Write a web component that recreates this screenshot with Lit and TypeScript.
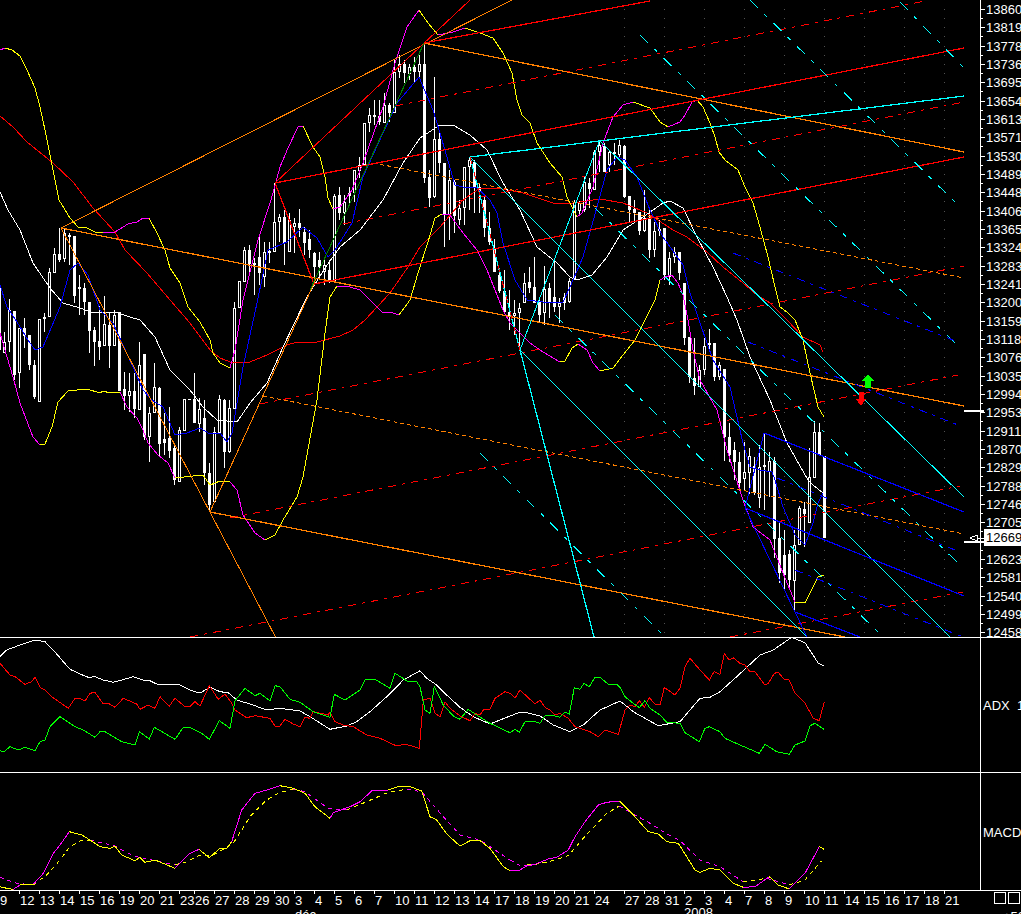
import { LitElement, html, svg, css } from 'lit';
import { customElement } from 'lit/decorators.js';

type Pt = [number, number];
type Candle = [number, number, number, number, number, number]; // x, high, low, bodyTop, bodyBottom, filled

// flat list of coordinates read at 3x, relative to a crop origin
const trace = (ox: number, oy: number, flat: number[]): Pt[] => {
  const out: Pt[] = [];
  for (let i = 0; i < flat.length; i += 2) out.push([ox + flat[i] / 3, oy + flat[i + 1] / 3]);
  return out;
};
const flatPts = (flat: number[]): Pt[] => trace(0, 0, flat.map((v) => v * 3));
const toAttr = (p: Pt[]) => p.map(([x, y]) => `${x.toFixed(1)},${y.toFixed(1)}`).join(' ');

const CANDLES: Candle[] = [
  [-1, 222, 355, 285, 350, 1], [4, 332, 353, 342, 353, 0], [9, 299, 352, 310, 342, 0], [14, 311, 380, 311, 375, 1],
  [19, 328, 388, 328, 373, 0], [24, 318, 348, 328, 336, 1], [29, 335, 370, 335, 365, 1], [34, 360, 399, 365, 397, 1],
  [39, 319, 402, 319, 402, 0], [44, 313, 332, 317, 319, 0], [49, 268, 317, 272, 317, 0], [54, 248, 273, 254, 273, 0],
  [59, 228, 262, 254, 260, 1], [64, 228, 262, 233, 259, 0], [69, 233, 265, 235, 237, 1], [74, 236, 303, 236, 296, 1],
  [79, 275, 315, 287, 289, 1], [84, 283, 315, 288, 302, 1], [89, 302, 353, 302, 331, 1], [94, 327, 366, 330, 342, 1],
  [99, 306, 360, 341, 347, 1], [104, 296, 346, 324, 346, 0], [109, 313, 368, 325, 346, 1], [114, 310, 346, 315, 346, 0],
  [119, 312, 391, 312, 391, 1], [124, 372, 410, 389, 396, 1], [129, 373, 412, 391, 396, 0], [134, 373, 418, 391, 409, 1],
  [139, 342, 410, 365, 410, 0], [144, 354, 440, 354, 437, 1], [149, 407, 462, 413, 437, 0], [154, 363, 413, 387, 413, 0],
  [159, 387, 457, 388, 444, 1], [164, 413, 455, 439, 443, 1], [169, 407, 458, 438, 451, 1], [174, 443, 485, 448, 480, 1],
  [179, 427, 482, 430, 482, 0], [184, 399, 431, 399, 431, 0], [189, 399, 400, 399, 400, 1], [194, 373, 423, 399, 423, 1],
  [199, 398, 432, 409, 424, 0], [204, 400, 485, 418, 473, 1], [209, 463, 512, 473, 505, 1], [214, 427, 502, 432, 502, 0],
  [219, 395, 433, 399, 433, 0], [224, 399, 468, 400, 452, 1], [229, 400, 453, 408, 452, 0], [234, 302, 409, 308, 409, 0],
  [239, 281, 308, 281, 308, 0], [244, 247, 282, 250, 282, 0], [249, 245, 273, 250, 264, 1], [254, 258, 295, 263, 265, 1],
  [259, 237, 285, 257, 273, 1], [264, 242, 287, 252, 277, 0], [269, 242, 263, 251, 253, 1], [274, 183, 252, 222, 252, 0],
  [279, 214, 242, 217, 222, 0], [284, 210, 265, 217, 243, 1], [289, 213, 252, 220, 252, 0], [294, 218, 253, 223, 227, 0],
  [299, 209, 237, 223, 228, 1], [304, 227, 255, 232, 243, 1], [309, 230, 258, 239, 250, 1], [314, 252, 277, 253, 267, 1],
  [319, 252, 277, 260, 267, 1], [324, 260, 285, 265, 272, 0], [329, 260, 283, 270, 280, 1], [334, 194, 282, 196, 282, 0],
  [339, 187, 220, 195, 213, 1], [344, 195, 225, 202, 213, 0], [349, 187, 203, 193, 196, 1], [354, 170, 202, 170, 193, 0],
  [359, 157, 178, 165, 171, 0], [364, 123, 165, 123, 165, 0], [369, 108, 132, 115, 123, 0], [374, 100, 125, 115, 117, 1],
  [379, 100, 125, 116, 122, 1], [384, 93, 123, 105, 123, 0], [389, 103, 122, 105, 113, 1], [394, 60, 113, 72, 113, 0],
  [399, 55, 78, 64, 72, 0], [404, 60, 83, 64, 73, 1], [409, 64, 80, 67, 74, 0], [414, 57, 83, 67, 72, 1],
  [419, 55, 78, 64, 72, 0], [424, 44, 183, 64, 178, 1], [429, 170, 207, 177, 198, 1], [434, 77, 198, 139, 197, 0],
  [439, 130, 173, 139, 163, 1], [444, 163, 247, 163, 215, 1], [449, 170, 240, 180, 215, 0], [454, 180, 233, 182, 216, 1],
  [459, 200, 225, 208, 220, 0], [464, 167, 225, 167, 208, 0], [469, 158, 210, 160, 167, 0], [474, 160, 213, 162, 187, 1],
  [479, 183, 213, 187, 192, 1], [484, 197, 237, 200, 228, 1], [489, 212, 245, 228, 242, 1], [494, 239, 272, 248, 272, 1],
  [499, 270, 293, 275, 291, 1], [504, 270, 312, 291, 312, 1], [509, 290, 330, 312, 316, 1], [514, 300, 335, 313, 316, 0],
  [519, 303, 348, 308, 313, 0], [524, 273, 303, 283, 303, 0], [529, 267, 293, 282, 288, 1], [534, 257, 303, 287, 303, 1],
  [539, 297, 323, 302, 315, 1], [544, 266, 325, 289, 313, 0], [549, 283, 318, 288, 302, 1], [554, 262, 312, 297, 307, 1],
  [559, 298, 323, 303, 307, 0], [564, 293, 310, 297, 303, 1], [569, 278, 303, 281, 302, 0], [574, 200, 280, 202, 280, 0],
  [579, 201, 216, 203, 211, 0], [584, 177, 212, 182, 210, 0], [589, 178, 208, 183, 189, 1], [594, 150, 190, 152, 190, 0],
  [599, 142, 172, 145, 152, 0], [604, 143, 172, 146, 172, 1], [609, 150, 172, 152, 165, 0], [614, 143, 165, 152, 154, 1],
  [619, 140, 157, 145, 155, 0], [624, 145, 198, 146, 197, 1], [629, 196, 223, 196, 210, 1], [634, 200, 223, 209, 213, 1],
  [639, 212, 235, 212, 231, 1], [644, 190, 232, 218, 231, 0], [649, 210, 258, 218, 250, 1], [654, 222, 257, 231, 250, 0],
  [659, 220, 236, 229, 231, 1], [664, 228, 280, 228, 275, 1], [669, 252, 285, 258, 277, 0], [674, 247, 263, 252, 257, 0],
  [679, 252, 280, 252, 273, 1], [684, 283, 345, 283, 338, 1], [689, 337, 383, 337, 377, 1], [694, 338, 395, 378, 386, 1],
  [699, 365, 387, 370, 387, 0], [704, 338, 375, 346, 370, 0], [709, 329, 352, 343, 345, 1], [714, 343, 381, 343, 377, 1],
  [719, 362, 380, 365, 377, 0], [724, 369, 461, 369, 437, 1], [729, 423, 462, 437, 455, 1], [734, 442, 480, 450, 462, 1],
  [739, 452, 490, 462, 483, 1], [744, 442, 490, 472, 479, 0], [749, 448, 494, 456, 473, 0], [754, 457, 495, 466, 493, 1],
  [759, 445, 508, 467, 498, 0], [764, 433, 510, 465, 467, 1], [769, 452, 497, 461, 472, 0], [774, 457, 558, 461, 539, 1],
  [779, 522, 583, 538, 573, 1], [784, 530, 590, 555, 575, 1], [789, 550, 590, 554, 580, 1], [794, 530, 612, 545, 581, 0],
  [799, 506, 545, 508, 545, 0], [804, 502, 547, 509, 514, 1], [809, 448, 523, 477, 523, 0], [814, 421, 478, 432, 478, 0],
  [819, 423, 455, 432, 455, 1], [824, 456, 538, 456, 538, 1],
];

// upper and lower bollinger, coloured by segment
const BANDS: [string, number[]][] = [
  ['magenta', [0, 50, 5, 48]],
  ['yellow', [5, 48, 12, 50, 20, 56, 27, 70, 35, 88, 40, 107, 45, 130, 50, 155, 53, 170, 59, 200, 70, 218, 78, 227, 85, 227, 95, 232, 103, 232]],
  ['magenta', [103, 232, 115, 232, 128, 224, 137, 222, 143, 218, 149, 218]],
  ['yellow', [149, 218, 157, 233, 165, 250, 170, 268, 180, 283, 188, 307, 200, 322, 210, 340, 213, 353, 220, 363, 230, 368]],
  ['magenta', [230, 368, 235, 350, 243, 300, 258, 240, 271, 200, 280, 167, 288, 148, 298, 127, 303, 126]],
  ['yellow', [303, 126, 313, 147, 320, 157, 325, 177, 328, 198, 333, 209]],
  ['magenta', [333, 209, 340, 207, 352, 190, 363, 163, 383, 107, 395, 63, 407, 27, 419, 10]],
  ['yellow', [419, 10, 428, 23, 438, 35]],
  ['magenta', [438, 35, 453, 32, 465, 28]],
  ['yellow', [465, 28, 480, 33, 493, 38, 503, 53, 512, 73, 517, 100, 522, 115, 530, 123, 537, 143, 550, 163, 562, 177, 567, 197, 577, 217]],
  ['magenta', [577, 217, 582, 213, 593, 187, 603, 143, 613, 117, 623, 105, 633, 102]],
  ['yellow', [633, 102, 650, 108, 660, 122, 668, 127]],
  ['magenta', [668, 127, 680, 122, 685, 115, 692, 102, 697, 100]],
  ['yellow', [697, 100, 703, 107, 710, 123, 715, 137, 719, 152, 725, 160, 738, 170, 745, 187, 753, 203, 760, 227, 768, 257, 775, 287, 780, 307, 787, 312, 795, 320, 803, 340, 810, 373, 818, 407, 824, 417]],
  ['magenta', [0, 333, 7, 357, 13, 377, 20, 403, 33, 437, 40, 445]],
  ['yellow', [40, 445, 45, 444, 52, 427, 58, 402, 68, 391, 87, 389, 100, 393, 103, 391, 110, 393, 120, 392]],
  ['magenta', [120, 392, 127, 407, 137, 418, 143, 430, 148, 443, 158, 455, 168, 463, 175, 478]],
  ['yellow', [175, 478, 193, 476, 203, 475, 210, 485, 220, 481, 230, 482]],
  ['magenta', [230, 482, 237, 490, 243, 515, 255, 533, 265, 540]],
  ['yellow', [265, 540, 275, 535, 283, 520, 297, 497, 303, 477, 317, 400, 325, 333, 330, 297, 337, 286]],
  ['magenta', [337, 286, 350, 287, 360, 290, 370, 300, 382, 312, 390, 312, 399, 315]],
  ['yellow', [399, 315, 410, 300, 418, 273, 428, 242, 435, 218, 442, 214]],
  ['magenta', [442, 214, 450, 215, 463, 233, 477, 250, 487, 270, 503, 310, 510, 323, 520, 333, 530, 343, 543, 352, 560, 362]],
  ['yellow', [560, 362, 565, 361, 572, 348, 578, 344]],
  ['magenta', [578, 344, 587, 350, 593, 363, 600, 371]],
  ['yellow', [600, 371, 613, 368, 623, 355, 635, 340, 655, 300, 660, 280]],
  ['magenta', [660, 280, 665, 277, 672, 275, 678, 283, 683, 295, 688, 320, 693, 350, 700, 380, 717, 410, 727, 450, 743, 500, 753, 527, 770, 540, 783, 573, 795, 602]],
  ['yellow', [795, 602, 805, 603, 813, 587, 818, 577, 824, 575]],
];

const BB_MID = [0, 116, 13, 127, 27, 142, 53, 163, 73, 182, 93, 208, 115, 232, 125, 250, 147, 273, 170, 300, 190, 323, 210, 350, 220, 358, 233, 363, 250, 362, 267, 355, 287, 345, 297, 342, 317, 342, 340, 336, 353, 330, 365, 320, 390, 293, 408, 267, 420, 247, 440, 227, 463, 200, 480, 188, 497, 188, 523, 193, 553, 203, 573, 203, 600, 199, 623, 203, 647, 213, 673, 230, 687, 237, 707, 252, 723, 267, 743, 283, 757, 295, 770, 303, 787, 320, 803, 337, 820, 345, 823, 352];
const WHITE_MA = [0, 192, 8, 210, 20, 230, 33, 263, 50, 288, 63, 303, 80, 308, 93, 313, 115, 312, 130, 317, 140, 320, 155, 337, 170, 370, 190, 390, 203, 407, 217, 420, 237, 422, 250, 403, 267, 383, 283, 347, 307, 297, 325, 268, 340, 247, 360, 230, 383, 200, 403, 163, 420, 138, 440, 125, 453, 125, 470, 135, 487, 150, 503, 183, 520, 210, 537, 247, 557, 263, 570, 277, 577, 280, 592, 275, 607, 257, 623, 230, 643, 217, 663, 203, 670, 201, 683, 208, 697, 237, 713, 267, 727, 297, 737, 320, 750, 357, 770, 400, 787, 443, 808, 480, 813, 485, 823, 493];
const BLUE_MA = [0, 285, 7, 307, 17, 322, 28, 340, 35, 350, 43, 347, 60, 307, 70, 270, 78, 263, 88, 275, 100, 310, 113, 323, 122, 343, 133, 367, 143, 390, 152, 400, 163, 407, 175, 435, 187, 433, 200, 428, 210, 434, 220, 433, 227, 442, 232, 433, 243, 367, 257, 303, 268, 250, 287, 242, 303, 227, 317, 238, 328, 257, 335, 250, 352, 223, 363, 177, 383, 133, 397, 103, 419, 77, 433, 110, 440, 133, 455, 185, 463, 187, 477, 188, 490, 200, 497, 213, 503, 243, 515, 280, 527, 300, 543, 302, 563, 302, 570, 287, 583, 257, 597, 207, 607, 170, 617, 157, 625, 160, 637, 177, 650, 210, 663, 237, 683, 265, 690, 293, 700, 323, 713, 360, 730, 387, 743, 443, 750, 467, 760, 470, 772, 472, 775, 480, 783, 507, 795, 535, 805, 545, 813, 523, 818, 503, 823, 493];

// trend tools: class, x1, y1, x2, y2
const TOOLS: [string, number, number, number, number][] = [
  ['orange', 61, 228, 512, 0], ['orange', 61, 228, 276, 638], ['orange', 210, 512, 316, 279],
  ['orange wide', 424, 43, 964, 152], ['orange wide', 61, 228, 964, 406], ['orange wide', 210, 512, 845, 637],
  ['orange dots', 373, 163, 964, 278], ['orange dots', 263, 396, 964, 534],
  ['red wide', 424, 43, 650, 1], ['red wide', 275, 183, 964, 48], ['red wide', 314, 284, 964, 157],
  ['red wide', 275, 183, 314, 284], ['red', 275, 183, 470, 0],
  ['red dash', 395, 106, 925, 1], ['red dash', 343, 224, 964, 102], ['red dash', 260, 404, 964, 266],
  ['red dash', 230, 518, 958, 375], ['red dash', 190, 637, 960, 486], ['red dash', 730, 637, 963, 592],
  ['green-dark', 310, 290, 424, 43],
  ['cyan wide', 470, 157, 964, 96], ['cyan', 470, 157, 950, 637], ['cyan', 600, 141, 964, 497],
  ['cyan wide', 520, 350, 594, 637], ['cyan', 520, 350, 599, 142], ['cyan', 520, 350, 807, 637],
  ['cyan wide', 470, 157, 520, 350], ['red thin-dash', 470, 157, 520, 350],
  ['cyan dash', 750, 0, 960, 207], ['cyan dash', 900, 2, 964, 68], ['cyan dash', 640, 35, 960, 348],
  ['cyan dash', 595, 208, 963, 568], ['cyan dash', 480, 453, 665, 637], ['cyan dash', 555, 315, 883, 637],
  ['blue dash', 733, 253, 958, 342], ['blue dash', 748, 342, 958, 425], ['blue dash', 777, 478, 960, 552],
  ['blue dash', 795, 570, 963, 637],
  ['blue wide', 764, 433, 964, 512], ['blue wide', 745, 508, 964, 596], ['blue wide', 795, 612, 860, 637],
  ['blue', 745, 508, 807, 637], ['blue', 745, 508, 764, 433],
];

const PRICES = [13860, 13819, 13778, 13736, 13695, 13654, 13613, 13571, 13530, 13489, 13448, 13406, 13365, 13324, 13283, 13241, 13200, 13159, 13118, 13076, 13035, 12994, 12953, 12911, 12870, 12829, 12788, 12746, 12705, 0, 12623, 12581, 12540, 12499, 12458];

const DATES: [number, string][] = [
  [-1, '9'], [19, '12'], [39, '13'], [59, '14'], [79, '15'], [99, '16'], [119, '19'], [139, '20'], [159, '21'], [179, '23'], [194, '26'],
  [214, '27'], [234, '28'], [254, '29'], [274, '30'], [294, '3'], [314, '4'], [334, '5'], [354, '6'], [374, '7'], [394, '10'], [414, '11'],
  [434, '12'], [454, '13'], [474, '14'], [494, '17'], [514, '18'], [534, '19'], [554, '20'], [574, '21'], [594, '24'], [624, '27'], [644, '28'],
  [664, '31'], [684, '2'], [704, '3'], [724, '4'], [744, '7'], [764, '8'], [784, '9'], [804, '10'], [824, '11'], [844, '14'], [864, '15'],
  [884, '16'], [904, '17'], [924, '18'], [944, '21'],
];

const ADX_WHITE = [...trace(0, 630, [0, 80, 20, 60, 60, 45, 105, 30, 135, 35, 160, 60, 190, 95, 210, 118, 240, 132, 265, 142, 285, 140, 310, 150, 340, 157, 365, 150, 400, 140, 430, 150, 445, 150, 470, 162, 510, 165, 535, 162, 565, 178, 590, 187, 605, 186, 630, 172, 660, 185, 685, 188, 710, 210, 750, 222, 800, 240, 840, 235, 900, 243, 930, 260, 990, 298, 1040, 288, 1070, 275, 1110, 245, 1160, 200, 1210, 150, 1260, 122, 1280, 145, 1310, 165, 1340, 195, 1380, 232, 1420, 260, 1470, 282, 1500, 270, 1530, 258]),
  ...trace(510, 630, [30, 247, 50, 248, 90, 258, 130, 285, 180, 305, 220, 285, 270, 240, 330, 213, 370, 245, 410, 268, 445, 287, 510, 275, 570, 205, 600, 202, 630, 185, 680, 140, 750, 75, 790, 60, 845, 22, 885, 38, 925, 100, 942, 108])];
const ADX_RED = [...trace(0, 630, [0, 100, 30, 135, 45, 140, 75, 163, 95, 155, 105, 142, 120, 172, 135, 180, 155, 200, 205, 235, 225, 205, 240, 205, 255, 213, 270, 190, 285, 187, 310, 222, 325, 220, 345, 232, 370, 205, 410, 222, 420, 238, 445, 225, 465, 235, 480, 200, 508, 228, 525, 205, 555, 230, 570, 230, 585, 215, 600, 228, 628, 167, 655, 208, 675, 192, 695, 220, 705, 240, 740, 263, 765, 257, 810, 265, 825, 288, 840, 288, 855, 268, 880, 282, 900, 290, 915, 262, 930, 265, 940, 245, 985, 255, 990, 245, 1005, 275, 1030, 285, 1060, 290, 1100, 315, 1140, 325, 1190, 348, 1215, 342, 1258, 355, 1270, 210, 1290, 205, 1305, 250, 1320, 260, 1335, 215, 1350, 235, 1380, 258, 1410, 272, 1425, 250, 1440, 255, 1450, 240, 1470, 237, 1485, 205, 1515, 185, 1530, 190]),
  ...trace(510, 630, [15, 205, 30, 180, 75, 222, 90, 210, 105, 232, 120, 240, 135, 255, 150, 250, 175, 265, 195, 290, 240, 305, 265, 320, 285, 300, 325, 313, 345, 240, 360, 225, 375, 230, 388, 212, 403, 232, 418, 203, 435, 222, 450, 225, 463, 172, 495, 195, 510, 175, 525, 110, 540, 85, 570, 120, 598, 150, 612, 125, 630, 133, 643, 70, 657, 90, 670, 83, 690, 100, 705, 105, 718, 123, 735, 125, 765, 165, 775, 160, 793, 130, 805, 127, 822, 148, 838, 150, 855, 190, 885, 220, 910, 265, 928, 272, 943, 215])];
const ADX_GREEN = [...trace(0, 630, [0, 362, 12, 365, 30, 350, 55, 360, 75, 352, 105, 362, 120, 335, 135, 330, 150, 290, 180, 260, 225, 290, 250, 300, 285, 322, 300, 305, 315, 305, 365, 335, 405, 345, 418, 305, 448, 327, 463, 292, 525, 328, 550, 292, 570, 292, 605, 310, 628, 328, 658, 272, 690, 295, 705, 212, 735, 175, 765, 197, 780, 190, 810, 213, 825, 167, 840, 170, 870, 208, 900, 217, 940, 245, 990, 262, 1003, 193, 1035, 210, 1080, 180, 1095, 150, 1125, 148, 1170, 175, 1185, 130, 1225, 155, 1250, 155, 1260, 170, 1275, 240, 1290, 250, 1303, 170, 1330, 225, 1360, 258, 1380, 268, 1405, 238, 1430, 255, 1470, 280, 1530, 308]),
  ...trace(510, 630, [15, 298, 28, 307, 45, 275, 75, 275, 90, 280, 105, 257, 135, 258, 150, 262, 165, 247, 178, 252, 193, 173, 210, 178, 222, 160, 238, 170, 255, 142, 270, 142, 298, 165, 320, 163, 330, 172, 345, 200, 370, 220, 388, 233, 405, 212, 420, 235, 450, 255, 470, 277, 510, 280, 525, 308, 568, 335, 585, 295, 598, 290, 630, 305, 645, 325, 690, 345, 748, 370, 765, 343, 800, 365, 838, 373, 855, 345, 885, 333, 900, 287, 915, 280, 942, 298])];

// macd main line (solid) and signal (dashed), each segment keeps its colour
const MACD_MAIN: [string, Pt[]][] = [
  ['yellow', trace(0, 630, [0, 770, 20, 775, 40, 778])],
  ['magenta', trace(0, 630, [40, 778, 60, 765])],
  ['yellow', trace(0, 630, [60, 765, 100, 763])],
  ['magenta', trace(0, 630, [100, 763, 130, 730, 160, 670, 180, 645, 208, 605])],
  ['yellow', trace(0, 630, [208, 605, 245, 615, 270, 630, 300, 650, 330, 655, 345, 648, 365, 675, 405, 692, 420, 682, 435, 697, 465, 690, 525, 715])],
  ['magenta', trace(0, 630, [525, 715, 570, 670, 597, 658])],
  ['yellow', trace(0, 630, [597, 658, 628, 683, 660, 655, 680, 655, 695, 635])],
  ['magenta', trace(0, 630, [695, 635, 725, 540, 765, 490, 800, 480, 840, 467])],
  ['yellow', trace(0, 630, [840, 467, 880, 475, 915, 490, 945, 530, 990, 565])],
  ['magenta', trace(0, 630, [990, 565, 1000, 548, 1050, 530, 1080, 515, 1115, 483, 1165, 480])],
  ['yellow', trace(0, 630, [1165, 480, 1200, 468, 1225, 468, 1265, 483, 1290, 560, 1310, 570, 1340, 612, 1380, 648, 1410, 632, 1440, 632, 1470, 655, 1510, 710, 1530, 722])],
  ['magenta', trace(510, 630, [0, 722, 25, 723, 50, 708, 75, 703, 115, 687, 140, 682, 175, 660, 195, 620, 225, 575, 265, 525, 290, 517, 328, 513])],
  ['yellow', trace(510, 630, [328, 513, 375, 560, 415, 605, 445, 612, 470, 635, 505, 640, 530, 680, 555, 720, 570, 727, 600, 715, 630, 720, 670, 760, 700, 772])],
  ['magenta', trace(510, 630, [700, 772, 735, 770, 778, 740])],
  ['yellow', trace(510, 630, [778, 740, 805, 765, 838, 777])],
  ['magenta', trace(510, 630, [838, 777, 885, 730, 928, 650])],
  ['yellow', trace(510, 630, [928, 650, 942, 658])],
];
const MACD_SIGNAL: [string, Pt[]][] = [
  ['magenta', trace(0, 630, [0, 742, 50, 760, 100, 765])],
  ['yellow', trace(0, 630, [100, 765, 140, 735, 180, 690, 210, 650, 240, 633, 270, 630])],
  ['magenta', trace(0, 630, [270, 630, 345, 648, 400, 678, 525, 705])],
  ['yellow', trace(0, 630, [525, 705, 560, 695, 600, 675, 640, 675, 700, 640, 750, 560, 800, 510, 840, 487, 880, 478])],
  ['magenta', trace(0, 630, [880, 478, 915, 485, 985, 535, 1040, 540])],
  ['yellow', trace(0, 630, [1040, 540, 1100, 515, 1165, 487, 1220, 478])],
  ['magenta', trace(0, 630, [1220, 478, 1265, 485, 1330, 560, 1380, 615, 1440, 630, 1530, 690])],
  ['magenta', trace(510, 630, [0, 690, 30, 707, 50, 705])],
  ['yellow', trace(510, 630, [50, 705, 75, 703, 115, 695, 175, 677, 220, 625, 290, 550, 328, 528])],
  ['magenta', trace(510, 630, [328, 528, 375, 555, 420, 580, 465, 608, 510, 632, 570, 690, 630, 710, 700, 755])],
  ['yellow', trace(510, 630, [700, 755, 770, 745])],
  ['magenta', trace(510, 630, [770, 745, 838, 765])],
  ['yellow', trace(510, 630, [838, 765, 885, 750, 935, 692])],
];

const GRID_X = [624, 664, 704, 744, 784, 824, 864, 904, 944];

@customElement('app-root')
export class AppRoot extends LitElement {
  static override styles = css`
    :host {
      display: block;
      width: 1021px;
      height: 914px;
      background: #000;
      overflow: hidden;
    }
    svg {
      display: block;
      shape-rendering: crispEdges;
    }
    text {
      font-family: 'Liberation Sans', Arial, sans-serif;
      font-size: 13px;
      fill: #fff;
    }
    .ink {
      fill: #000;
    }
    polyline,
    line {
      fill: none;
      stroke-width: 1;
    }
    .frame {
      stroke: #fff;
    }
    .white {
      stroke: #fff;
    }
    .orange {
      stroke: #ff8000;
    }
    .red {
      stroke: #f00;
    }
    .cyan {
      stroke: #0ff;
    }
    .blue {
      stroke: #00f;
    }
    .yellow {
      stroke: #ff0;
    }
    .magenta {
      stroke: #f0f;
    }
    .green {
      stroke: #0f0;
    }
    .green-dark {
      stroke: #008000;
    }
    .wide {
      stroke-width: 1.25;
    }
    .dash {
      stroke-dasharray: 8 6 3 6;
    }
    .thin-dash {
      stroke-dasharray: 7 9;
    }
    .dots {
      stroke-dasharray: 4 3;
    }
    .cyan.dash {
      stroke-dasharray: 11 9 4 9;
    }
    .signal {
      stroke-dasharray: 4 4;
    }
    .body-full {
      fill: #fff;
    }
    .body-open {
      fill: #000;
      stroke: #fff;
    }
    .wick {
      fill: #fff;
    }
    .dot {
      fill: #505050;
    }
    .up {
      fill: #0f0;
    }
    .down {
      fill: #f00;
    }
    .box {
      fill: none;
      stroke: #fff;
    }
    .tag {
      fill: #fff;
    }
  `;

  private renderGrid() {
    const ys = Array.from({ length: 69 }, (_, i) => Math.round(9 + i * 9.165));
    return GRID_X.map((x) => ys.map((y) => svg`<rect class="dot" x=${x} y=${y} width="1" height="1"></rect>`));
  }

  private renderCandles() {
    return CANDLES.map(
      ([x, hi, lo, top, bot, full]) => svg`
        <rect class="wick" x=${x} y=${hi} width="1" height=${lo - hi}></rect>
        ${full
          ? svg`<rect class="body-full" x=${x - 1} y=${top} width="3" height=${Math.max(bot - top, 1)}></rect>`
          : svg`<rect class="body-open" x=${x - 0.5} y=${top + 0.5} width="2" height=${Math.max(bot - top - 1, 1)}></rect>`}
      `
    );
  }

  private renderPriceAxis() {
    const ticks = Array.from({ length: 69 }, (_, i) => Math.round(9 + i * 9.165));
    return svg`
      ${ticks.map((y, i) => svg`<line class="frame" x1="981" y1=${y + 0.5} x2=${i % 2 ? 983 : 985} y2=${y + 0.5}></line>`)}
      ${PRICES.map((p, i) => (p ? svg`<text x="986" y=${Math.round(9 + i * 18.33) + 5}>${p}</text>` : null))}
      <rect class="tag" x="964" y="410" width="20" height="2"></rect>
      <rect class="tag" x="964" y="541" width="20" height="2"></rect>
      <polyline class="white" points="977,535 970,538 977,541 977,535"></polyline>
      <line class="white" x1="977" y1="538.5" x2="984" y2="538.5"></line>
      <rect class="tag" x="984" y="529" width="37" height="17"></rect>
      <text class="ink" x="986" y="542">12669</text>
    `;
  }

  private renderDates() {
    return DATES.map(
      ([x, label]) => svg`
        <line class="frame" x1=${x + 0.5} y1="890" x2=${x + 0.5} y2="894"></line>
        <text x=${x + 1} y="905">${label}</text>
      `
    );
  }

  override render() {
    return html`
      <svg width="1021" height="914" viewBox="0 0 1021 914">
        <defs>
          <clipPath id="main"><rect x="0" y="0" width="980" height="637"></rect></clipPath>
        </defs>

        <g clip-path="url(#main)">
          ${this.renderGrid()} ${this.renderCandles()}
          <polyline class="red" points=${toAttr(flatPts(BB_MID))}></polyline>
          <polyline class="white" points=${toAttr(flatPts(WHITE_MA))}></polyline>
          <polyline class="blue" points=${toAttr(flatPts(BLUE_MA))}></polyline>
          ${BANDS.map(([c, p]) => svg`<polyline class=${c} points=${toAttr(flatPts(p))}></polyline>`)}
          ${TOOLS.map(([c, x1, y1, x2, y2]) => svg`<line class=${c} x1=${x1} y1=${y1} x2=${x2} y2=${y2}></line>`)}
          <path class="up" d="M868 374 L874 381 L871 381 L871 388 L865 388 L865 381 L862 381 Z"></path>
          <path class="down" d="M861 406 L866 399 L864 399 L864 392 L859 392 L859 399 L856 399 Z"></path>
        </g>

        <polyline class="white" points=${toAttr(ADX_WHITE)}></polyline>
        <polyline class="red" points=${toAttr(ADX_RED)}></polyline>
        <polyline class="green" points=${toAttr(ADX_GREEN)}></polyline>

        ${MACD_SIGNAL.map(([c, p]) => svg`<polyline class="${c} signal" points=${toAttr(p)}></polyline>`)}
        ${MACD_MAIN.map(([c, p]) => svg`<polyline class=${c} points=${toAttr(p)}></polyline>`)}

        <line class="frame" x1="0" y1="637.5" x2="1021" y2="637.5"></line>
        <line class="frame" x1="0" y1="772.5" x2="1021" y2="772.5"></line>
        <line class="frame" x1="0" y1="890.5" x2="1021" y2="890.5"></line>
        <line class="frame" x1="980.5" y1="0" x2="980.5" y2="891"></line>

        ${this.renderPriceAxis()} ${this.renderDates()}
        <text x="983" y="710">ADX</text>
        <text x="1017" y="710">1</text>
        <text x="983" y="837">MACD</text>
        <text x="295" y="919">déc</text>
        <text x="684" y="917">2008</text>
        <text x="1003" y="921">+50</text>
        <rect class="box" x="994.5" y="892.5" width="11" height="11"></rect>
        <rect class="box" x="1008.5" y="892.5" width="11" height="11"></rect>
      </svg>
    `;
  }
}

declare global {
  interface HTMLElementTagNameMap {
    'app-root': AppRoot;
  }
}
